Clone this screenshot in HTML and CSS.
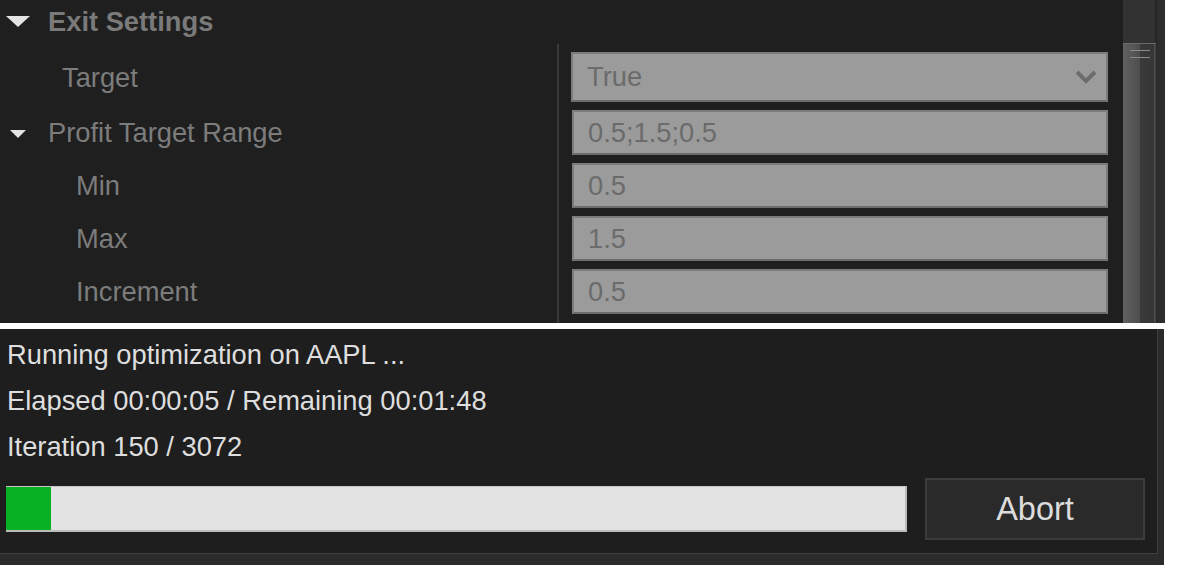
FILE: index.html
```html
<!DOCTYPE html>
<html>
<head>
<meta charset="utf-8">
<link rel="stylesheet" href="styles.css">
</head>
<body>
<div class="top">
  <div class="content">
    <div class="header">
      <svg class="tri-big" width="24" height="11" viewBox="0 0 24 11"><polygon points="0,0 24,0 12,11" fill="#e4e4e4"/></svg>
      <span>Exit Settings</span>
    </div>
    <div class="props">
      <div class="labels">
        <div class="lab tall ind1">Target</div>
        <div class="lab group">
          <svg class="tri-small" width="16" height="8" viewBox="0 0 16 8"><polygon points="0,0 16,0 8,8" fill="#e4e4e4"/></svg>
          <span>Profit Target Range</span>
        </div>
        <div class="lab ind2">Min</div>
        <div class="lab ind2">Max</div>
        <div class="lab ind2">Increment</div>
      </div>
      <div class="sep"></div>
      <div class="values">
        <div class="field tall">
          <span>True</span>
          <svg class="chev" width="22" height="14" viewBox="0 0 22 14"><polyline points="2,2 11,11 20,2" fill="none" stroke="#6c6c6c" stroke-width="4"/></svg>
        </div>
        <div class="field"><span>0.5;1.5;0.5</span></div>
        <div class="field"><span>0.5</span></div>
        <div class="field"><span>1.5</span></div>
        <div class="field"><span>0.5</span></div>
      </div>
    </div>
  </div>
  <div class="scroll">
    <div class="track">
      <div class="thumb">
        <div class="grip"></div>
      </div>
    </div>
    <div class="edge"></div>
  </div>
</div>
<div class="bottom">
  <div class="inner">
    <div class="status">
      <div class="line">Running optimization on AAPL ...</div>
      <div class="line">Elapsed 00:00:05 / Remaining 00:01:48</div>
      <div class="line">Iteration 150 / 3072</div>
    </div>
    <div class="actions">
      <div class="bar"><div class="fill" style="width:45px"></div></div>
      <button class="abort">Abort</button>
    </div>
  </div>
</div>
</body>
</html>
```
FILE: styles.css
```css
* { box-sizing: border-box; }
html, body { margin: 0; padding: 0; background: #ffffff; }
body { font-family: "Liberation Sans", Arial, sans-serif; font-size: 27.3px; width: 1178px; height: 574px; overflow: hidden; }

.top { display: flex; width: 1165px; height: 323px; background: #1f1f1f; overflow: hidden; }
.content { flex: 1; display: flex; flex-direction: column; }

.header { height: 44px; display: flex; align-items: center; padding-left: 6px; padding-bottom: 1px; }
.header span { margin-left: 18px; font-weight: bold; color: #7a7a7a; }

.props { flex: 1; display: flex; }
.labels { width: 557px; display: flex; flex-direction: column; gap: 8px; padding: 8px 0 9px; }
.lab { height: 45px; display: flex; align-items: center; color: #7c7c7c; padding-top: 1px; }
.lab.tall { height: 50px; }
.ind1 { padding-left: 62px; }
.ind2 { padding-left: 76px; }
.group { padding-left: 10px; }
.group span { margin-left: 22px; }
.tri-small { margin-top: 1px; }

.sep { width: 2px; background: #393939; }

.values { flex: 1; display: flex; flex-direction: column; gap: 8px; padding: 8px 15px 9px 12px; }
.field { height: 45px; display: flex; align-items: center; justify-content: space-between; background: #9b9b9b; border: 2px solid #7c7c7c; border-bottom-color: #6c6c6c; padding-left: 14px; padding-right: 9px; color: #6b6b6b; }
.field.tall { height: 50px; }
.field:not(.tall) { margin-left: 1px; }

.scroll { width: 42px; display: flex; }
.track { width: 34px; background: #323232; border-right: 2px solid #262626; }
.thumb { margin-top: 43px; height: 300px; width: 33px; border-top: 1px solid #6a6a6a; background: linear-gradient(to right, #616161 0, #4e4e4e 50%, #3a3a3a 52%, #363636 94%, #565656 96%, #3a3a3a 100%); padding: 6px 0 0 7px; }
.grip { width: 20px; height: 8px; border-top: 1px solid #8a8a8a; border-bottom: 1px solid #8a8a8a; }
.edge { flex: 1; background: #2d2d2d; }

.bottom { margin-top: 6px; width: 1164px; height: 236px; background: #2b2b2b; padding: 0 6px 11px 0; }
.inner { height: 100%; background: #1e1e1e; border-right: 1px solid #3e3e3e; border-bottom: 1px solid #3e3e3e; padding: 3px 12px 0 6px; }
.status { display: flex; flex-direction: column; }
.line { line-height: 46px; color: #dedede; padding-left: 1px; }
.actions { display: flex; align-items: center; gap: 18px; margin-top: 8px; }
.bar { width: 901px; height: 46px; background: #e3e3e3; border-top: 1px solid #c8c8c8; border-right: 2px solid #bcbcbc; border-bottom: 2px solid #bcbcbc; display: flex; }
.fill { height: 100%; background: #08b124; }
.abort { width: 220px; height: 62px; background: #2a2a2a; border: 2px solid #3c3c3c; color: #dcdcdc; font-family: "Liberation Sans", Arial, sans-serif; font-size: 32.5px; padding: 0; }
```
